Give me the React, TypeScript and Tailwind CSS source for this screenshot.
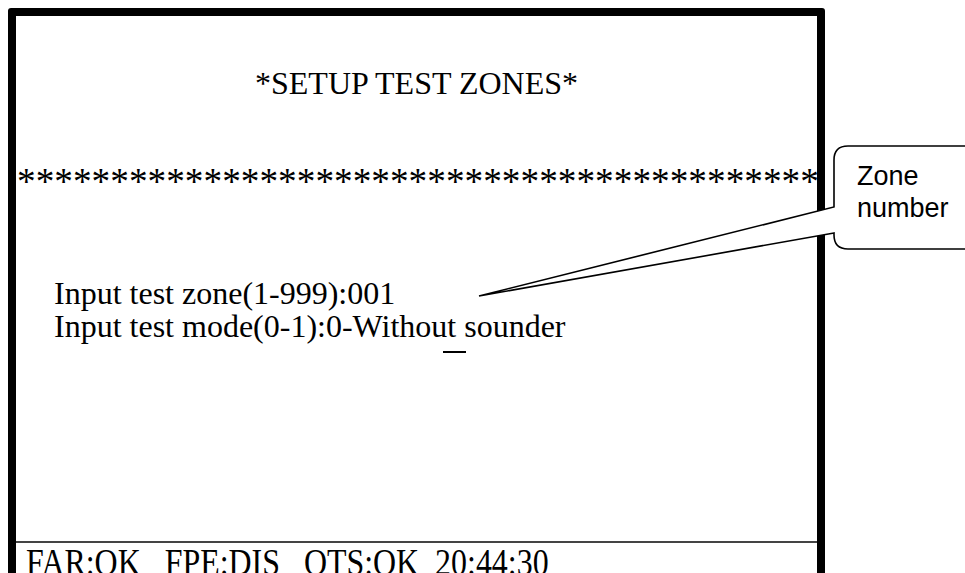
import React from 'react'

const serif = { fontFamily: '"Liberation Serif", "Times New Roman", serif' }

function Callout() {
  return (
    <svg
      className="pointer-events-none absolute left-0 top-0"
      width="965"
      height="573"
      viewBox="0 0 965 573"
    >
      <path
        d="M834 233 L479 296 L834 207 L834 160 Q834 146 848 146 L975 146 L975 249 L848 249 Q834 249 834 235 Z"
        fill="#fff"
        stroke="#000"
        strokeWidth="1.6"
        strokeLinejoin="miter"
      />
      <text
        x="857"
        y="185"
        fontSize="27"
        fontFamily='"Liberation Sans", Arial, sans-serif'
        fill="#000"
      >
        Zone
      </text>
      <text
        x="857"
        y="217"
        fontSize="27"
        fontFamily='"Liberation Sans", Arial, sans-serif'
        fill="#000"
      >
        number
      </text>
    </svg>
  )
}

export default function App() {
  const stars = '*'.repeat(43)

  return (
    <div className="relative h-[573px] w-[965px] overflow-hidden bg-white text-black" style={serif}>
      <div className="ml-2 mt-2 flex h-[600px] w-[817px] flex-col overflow-hidden rounded-[3px] border-8 border-black">
        {/* Title */}
        <div className="mt-[51px] text-center text-[32px] leading-[32px]">*SETUP TEST ZONES*</div>

        {/* Separator stars */}
        <div className="mt-[64px] whitespace-nowrap pl-px text-[37.3px] leading-[37px]">{stars}</div>

        {/* Input lines */}
        <div className="mt-[77px] pl-[38px] text-[32px] leading-[33px]">
          <div>Input test zone(1-999):001</div>
          <div className="whitespace-pre">
            Input test mode(0-1):0-Withou
            <span className="relative">
              t
              <span className="absolute left-[-4px] top-[43px] h-[2px] w-[23px] bg-black" />
            </span>{' '}
            sounder
          </div>
        </div>

        <div className="flex-1" />

        {/* Status bar */}
        <div className="h-[2px] bg-[#444]" />
        <div className="h-[57px] overflow-hidden pl-[10px]">
          <div className="origin-left scale-x-[0.84] whitespace-pre text-[38px] leading-[38px]">
            FAR:OK   FPE:DIS   OTS:OK  20:44:30
          </div>
        </div>
      </div>

      <Callout />
    </div>
  )
}
